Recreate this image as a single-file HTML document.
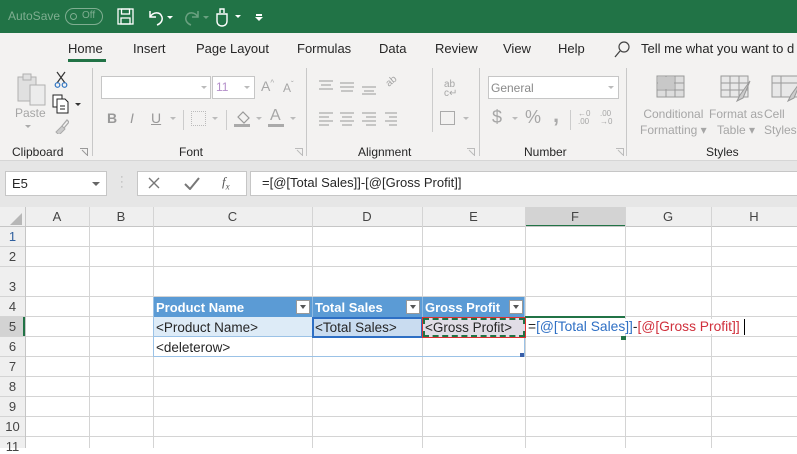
<!DOCTYPE html>
<html><head><meta charset="utf-8"><style>
*{margin:0;padding:0;box-sizing:border-box}
body{width:797px;height:448px;overflow:hidden;position:relative;font-family:"Liberation Sans",sans-serif;background:#fff}
.a{position:absolute}
.t{position:absolute;white-space:nowrap}
.g{color:#a6a6a6}
.hl{position:absolute;left:0;width:797px;height:1px;background:#d4d4d4}
.vl{position:absolute;top:207px;height:241px;width:1px;background:#d4d4d4}
.rn{position:absolute;left:0;width:25px;text-align:center;font-size:13px;color:#444}
.cn{position:absolute;top:207px;height:20px;line-height:20px;text-align:center;font-size:13px;color:#444}
.dd{position:absolute;width:14px;height:14px;background:#fff;border:1px solid #999}
.dd:after{content:"";position:absolute;left:3px;top:4px;border-left:3.5px solid transparent;border-right:3.5px solid transparent;border-top:4px solid #555}
</style></head><body>
<!-- title bar -->
<div class="a" style="left:0;top:0;width:797px;height:33px;background:#217346"></div>
<div class="t" style="left:8px;top:9px;font-size:12px;color:#7fae91">AutoSave</div>
<div class="a" style="left:65px;top:8px;width:38px;height:17px;border:1px solid #7fae91;border-radius:9px"></div>
<div class="a" style="left:70px;top:13px;width:7px;height:7px;border-radius:50%;border:1px solid #7fae91"></div>
<div class="t" style="left:82px;top:10px;font-size:10px;color:#7fae91">Off</div>
<svg class="a" style="left:117px;top:8px" width="18" height="18"><rect x="1" y="1" width="15" height="15" fill="none" stroke="#fff" stroke-width="1.3"/><rect x="4.5" y="1" width="8" height="5" fill="none" stroke="#fff" stroke-width="1.3"/><rect x="4" y="10" width="9" height="6" fill="none" stroke="#fff" stroke-width="1.3"/></svg>
<svg class="a" style="left:146px;top:7px" width="30" height="20"><path d="M4 4v6h6M4 10c3-5 10-6 12 0c1 4-2 7-5 8" fill="none" stroke="#fff" stroke-width="1.5"/><path d="M21 9l3 3l3-3z" fill="#fff"/></svg>
<svg class="a" style="left:182px;top:7px" width="30" height="20"><path d="M16 4v6h-6M16 10c-3-5-10-6-12 0c-1 4 2 7 5 8" fill="none" stroke="#6ba181" stroke-width="1.5"/><path d="M21 9l3 3l3-3z" fill="#6ba181"/></svg>
<svg class="a" style="left:214px;top:6px" width="32" height="22"><path d="M6 7v-4h4v4M3 8h10v7c0 3-2 5-5 5s-5-2-5-5z" fill="none" stroke="#fff" stroke-width="1.4"/><path d="M21 9l3 3l3-3z" fill="#fff"/></svg>
<div class="a" style="left:256px;top:14px;width:6px;height:1.5px;background:#fff"></div>
<svg class="a" style="left:255px;top:17px" width="8" height="5"><path d="M0 0h8l-4 4z" fill="#fff"/></svg>
<!-- ribbon -->
<div class="a" style="left:0;top:33px;width:797px;height:128px;background:#f3f2f1"></div>
<div class="a" style="left:0;top:160px;width:797px;height:1px;background:#d6d6d6"></div>
<div class="t" style="left:68px;top:41px;font-size:13px;color:#262626">Home</div>
<div class="a" style="left:68px;top:59px;width:38px;height:3px;background:#217346"></div>
<div class="t" style="left:133px;top:41px;font-size:13px;color:#262626">Insert</div>
<div class="t" style="left:196px;top:41px;font-size:13px;color:#262626">Page Layout</div>
<div class="t" style="left:297px;top:41px;font-size:13px;color:#262626">Formulas</div>
<div class="t" style="left:379px;top:41px;font-size:13px;color:#262626">Data</div>
<div class="t" style="left:435px;top:41px;font-size:13px;color:#262626">Review</div>
<div class="t" style="left:503px;top:41px;font-size:13px;color:#262626">View</div>
<div class="t" style="left:558px;top:41px;font-size:13px;color:#262626">Help</div>
<svg class="a" style="left:614px;top:41px" width="16" height="17"><circle cx="10" cy="6" r="5" fill="none" stroke="#444" stroke-width="1.2"/><path d="M6 10l-5 6" stroke="#444" stroke-width="1.3"/></svg>
<div class="t" style="left:641px;top:41px;font-size:13px;color:#262626">Tell me what you want to d</div>
<!-- clipboard -->
<svg class="a" style="left:16px;top:72px" width="32" height="34"><rect x="2" y="5" width="18" height="24" fill="#e0e0e0" stroke="#b0b0b0"/><rect x="7" y="2" width="8" height="6" fill="#e0e0e0" stroke="#b0b0b0"/><rect x="14" y="13" width="15" height="20" fill="#ececec" stroke="#b0b0b0"/></svg>
<div class="t g" style="left:15px;top:106px;font-size:12px">Paste</div>
<svg class="a" style="left:25px;top:125px" width="6" height="4"><path d="M0 0h6l-3 3z" fill="#aaa"/></svg>
<svg class="a" style="left:54px;top:71px" width="14" height="18"><path d="M3 1l8 11M11 1l-8 11" stroke="#333" stroke-width="1.2"/><circle cx="3.5" cy="14" r="2.3" fill="none" stroke="#2f75c3" stroke-width="1.2"/><circle cx="10.5" cy="14" r="2.3" fill="none" stroke="#2f75c3" stroke-width="1.2"/></svg>
<svg class="a" style="left:52px;top:94px" width="30" height="20"><rect x="1" y="1" width="9" height="12" fill="#fff" stroke="#222"/><path d="M5 5h8l3 3v11h-11z" fill="#fff" stroke="#222"/><path d="M8 12h5M8 15h5" stroke="#222"/><path d="M23 9h6l-3 3z" fill="#333"/></svg>
<svg class="a" style="left:53px;top:118px" width="16" height="16"><path d="M3 14l6-6l3 3l-6 6z" fill="#ccc" stroke="#aaa"/><path d="M9 8l5-6l2 2l-5 6" fill="none" stroke="#aaa" stroke-width="1.3"/></svg>
<div class="t" style="left:12px;top:145px;font-size:12px;color:#262626">Clipboard</div>
<svg class="a" style="left:80px;top:148px" width="8" height="8"><path d="M0 .5h7.5v7.5M2 2l5 5" fill="none" stroke="#999"/></svg>
<div class="a" style="left:92px;top:68px;width:1px;height:88px;background:#c8c8c8"></div>
<!-- font -->
<div class="a" style="left:101px;top:76px;width:110px;height:23px;background:#fff;border:1px solid #c6c6c6"></div>
<svg class="a" style="left:201px;top:86px" width="6" height="4"><path d="M0 0h6l-3 3z" fill="#bbb"/></svg>
<div class="a" style="left:212px;top:76px;width:43px;height:23px;background:#fff;border:1px solid #c6c6c6"></div>
<div class="t" style="left:216px;top:80px;font-size:12px;color:#b48fc9">11</div>
<svg class="a" style="left:244px;top:86px" width="6" height="4"><path d="M0 0h6l-3 3z" fill="#bbb"/></svg>
<div class="t g" style="left:261px;top:78px;font-size:14px">A<sup style="font-size:8px">^</sup></div>
<div class="t g" style="left:283px;top:80px;font-size:12px">A<sup style="font-size:8px">ˇ</sup></div>
<div class="t" style="left:107px;top:110px;font-size:14px;font-weight:bold;color:#999">B</div>
<div class="t" style="left:130px;top:110px;font-size:14px;font-style:italic;color:#999">I</div>
<div class="t" style="left:151px;top:110px;font-size:14px;text-decoration:underline;color:#999">U</div>
<svg class="a" style="left:170px;top:117px" width="6" height="4"><path d="M0 0h6l-3 3z" fill="#bbb"/></svg>
<div class="a" style="left:183px;top:110px;width:1px;height:20px;background:#ccc"></div>
<div class="a" style="left:191px;top:111px;width:15px;height:15px;border:1px dotted #bbb"></div>
<svg class="a" style="left:212px;top:117px" width="6" height="4"><path d="M0 0h6l-3 3z" fill="#bbb"/></svg>
<div class="a" style="left:226px;top:110px;width:1px;height:20px;background:#ccc"></div>
<svg class="a" style="left:234px;top:109px" width="18" height="18"><path d="M4 8l5-5l6 6l-5 5z" fill="none" stroke="#999" stroke-width="1.2"/><rect x="0" y="15" width="16" height="3" fill="#aaa"/></svg>
<svg class="a" style="left:256px;top:117px" width="6" height="4"><path d="M0 0h6l-3 3z" fill="#bbb"/></svg>
<div class="t g" style="left:270px;top:107px;font-size:16px">A</div>
<div class="a" style="left:268px;top:124px;width:16px;height:3px;background:#aaa"></div>
<svg class="a" style="left:290px;top:117px" width="6" height="4"><path d="M0 0h6l-3 3z" fill="#bbb"/></svg>
<div class="t" style="left:179px;top:145px;font-size:12px;color:#262626">Font</div>
<svg class="a" style="left:295px;top:148px" width="8" height="8"><path d="M0 .5h7.5v7.5M2 2l5 5" fill="none" stroke="#bbb"/></svg>
<div class="a" style="left:306px;top:68px;width:1px;height:88px;background:#c8c8c8"></div>
<!-- alignment -->
<svg class="a" style="left:317px;top:78px" width="90" height="50" stroke="#999" stroke-width="1">
<path d="M2 3h14M4 7h10M2 11h14M23 5h14M23 9h14M24 13h12M45 9h14M47 13h10M45 16h14"/>
<path d="M2 35h14M2 39h10M2 43h14M2 47h10M23 35h14M25 39h10M23 43h14M25 47h10M45 35h14M49 39h10M45 43h14M49 47h10M68 35h12M72 39h8M68 43h12M72 47h8"/></svg>
<div class="t g" style="left:386px;top:76px;font-size:10px;transform:rotate(-40deg)">ab</div>
<div class="t g" style="left:444px;top:80px;font-size:10px;line-height:9px">ab<br>c↵</div>
<div class="a" style="left:432px;top:68px;width:1px;height:64px;background:#ccc"></div>
<div class="a" style="left:440px;top:111px;width:15px;height:14px;border:1px solid #aaa"></div>
<svg class="a" style="left:463px;top:117px" width="6" height="4"><path d="M0 0h6l-3 3z" fill="#bbb"/></svg>
<div class="t" style="left:358px;top:145px;font-size:12px;color:#262626">Alignment</div>
<svg class="a" style="left:467px;top:148px" width="8" height="8"><path d="M0 .5h7.5v7.5M2 2l5 5" fill="none" stroke="#bbb"/></svg>
<div class="a" style="left:479px;top:68px;width:1px;height:88px;background:#c8c8c8"></div>
<!-- number -->
<div class="a" style="left:488px;top:76px;width:131px;height:23px;background:#fff;border:1px solid #c6c6c6"></div>
<div class="t g" style="left:491px;top:81px;font-size:12px;color:#8a8a8a">General</div>
<svg class="a" style="left:608px;top:86px" width="6" height="4"><path d="M0 0h6l-3 3z" fill="#bbb"/></svg>
<div class="t g" style="left:492px;top:107px;font-size:18px">$</div>
<svg class="a" style="left:512px;top:117px" width="6" height="4"><path d="M0 0h6l-3 3z" fill="#bbb"/></svg>
<div class="t g" style="left:525px;top:107px;font-size:18px">%</div>
<div class="t" style="left:553px;top:102px;font-size:22px;font-weight:bold;color:#aaa">,</div>
<div class="a" style="left:570px;top:110px;width:1px;height:20px;background:#ccc"></div>
<div class="t g" style="left:578px;top:110px;font-size:8px;line-height:8px">←0<br>.00</div>
<div class="t g" style="left:600px;top:110px;font-size:8px;line-height:8px">.00<br>→0</div>
<div class="t" style="left:524px;top:145px;font-size:12px;color:#262626">Number</div>
<svg class="a" style="left:616px;top:148px" width="8" height="8"><path d="M0 .5h7.5v7.5M2 2l5 5" fill="none" stroke="#bbb"/></svg>
<div class="a" style="left:626px;top:68px;width:1px;height:88px;background:#c8c8c8"></div>
<!-- styles -->
<svg class="a" style="left:656px;top:75px" width="30" height="24"><rect x="1" y="1" width="27" height="21" fill="#ddd" stroke="#999"/><path d="M1 8h27M1 15h27M10 1v21M19 1v21" stroke="#999"/><rect x="2" y="2" width="16" height="12" fill="#c8c8c8"/></svg>
<svg class="a" style="left:720px;top:75px" width="32" height="30"><rect x="1" y="1" width="27" height="21" fill="#e8e8e8" stroke="#999"/><path d="M1 8h27M1 15h27M10 1v21M19 1v21" stroke="#999"/><path d="M30 6l-10 14l-3 6l6-3z" fill="#ccc" stroke="#999"/></svg>
<svg class="a" style="left:771px;top:75px" width="26" height="30"><rect x="1" y="1" width="27" height="21" fill="#e8e8e8" stroke="#999"/><path d="M1 8h27M10 1v21" stroke="#999"/><path d="M30 6l-10 14l-3 6l6-3z" fill="#ccc" stroke="#999"/></svg>
<div class="t g" style="left:640px;top:106px;font-size:12px;line-height:16px;text-align:center">Conditional<br>Formatting ▾</div>
<div class="t g" style="left:709px;top:106px;font-size:12px;line-height:16px;text-align:center">Format as<br>Table ▾</div>
<div class="t g" style="left:764px;top:106px;font-size:12px;line-height:16px">Cell<br>Styles</div>
<div class="t" style="left:706px;top:145px;font-size:12px;color:#262626">Styles</div>
<!-- formula bar -->
<div class="a" style="left:0;top:161px;width:797px;height:46px;background:#e6e6e6"></div>
<div class="a" style="left:5px;top:171px;width:102px;height:25px;background:#fff;border:1px solid #c6c6c6"></div>
<div class="t" style="left:12px;top:176px;font-size:13px;color:#262626">E5</div>
<svg class="a" style="left:92px;top:182px" width="8" height="5"><path d="M0 0h8l-4 4z" fill="#666"/></svg>
<div class="t" style="left:120px;top:175px;font-size:11px;color:#aaa;line-height:5px">·<br>·<br>·</div>
<div class="a" style="left:137px;top:171px;width:110px;height:25px;background:#fff;border:1px solid #c6c6c6"></div>
<svg class="a" style="left:148px;top:177px" width="12" height="12"><path d="M1 1l10 10M11 1l-10 10" stroke="#777" stroke-width="1.4"/></svg>
<svg class="a" style="left:184px;top:177px" width="16" height="13"><path d="M1 7l5 5l9-11" fill="none" stroke="#777" stroke-width="2"/></svg>
<div class="t" style="left:222px;top:174px;font-size:13px;font-style:italic;font-family:'Liberation Serif',serif;color:#555"><i>f</i><sub style="font-size:9px">x</sub></div>
<div class="a" style="left:250px;top:171px;width:547px;height:25px;background:#fff;border:1px solid #c6c6c6;border-right:none"></div>
<div class="t" style="left:262px;top:175px;font-size:13px;color:#262626">=[@[Total Sales]]-[@[Gross Profit]]</div>
<!-- grid headers -->
<div class="a" style="left:0;top:207px;width:797px;height:20px;background:#efefef"></div>
<div class="a" style="left:0;top:207px;width:25px;height:241px;background:#efefef"></div>
<svg class="a" style="left:9px;top:212px" width="14" height="14"><path d="M13 1v12h-12z" fill="#b7b7b7"/></svg>
<div class="a" style="left:525px;top:207px;width:100px;height:20px;background:#d3d3d3"></div>
<div class="a" style="left:525px;top:225px;width:100px;height:2px;background:#217346"></div>
<div class="a" style="left:0;top:317px;width:25px;height:20px;background:#d3d3d3"></div>
<div class="a" style="left:23px;top:317px;width:2px;height:20px;background:#217346"></div>
<div class="hl" style="top:226px;background:#c6c6c6"></div>
<div class="hl" style="top:246px"></div><div class="hl" style="top:266px"></div><div class="hl" style="top:296px"></div>
<div class="hl" style="top:316px"></div><div class="hl" style="top:336px"></div><div class="hl" style="top:356px"></div>
<div class="hl" style="top:376px"></div><div class="hl" style="top:396px"></div><div class="hl" style="top:416px"></div><div class="hl" style="top:436px"></div>
<div class="vl" style="left:25px;background:#c6c6c6"></div><div class="vl" style="left:89px"></div><div class="vl" style="left:153px"></div>
<div class="vl" style="left:312px"></div><div class="vl" style="left:422px"></div><div class="vl" style="left:525px"></div>
<div class="vl" style="left:625px"></div><div class="vl" style="left:711px"></div>
<div class="cn" style="left:25px;width:64px">A</div><div class="cn" style="left:89px;width:64px">B</div>
<div class="cn" style="left:153px;width:159px">C</div><div class="cn" style="left:312px;width:110px">D</div>
<div class="cn" style="left:422px;width:103px">E</div><div class="cn" style="left:525px;width:100px">F</div>
<div class="cn" style="left:625px;width:86px">G</div><div class="cn" style="left:711px;width:86px">H</div>
<div class="rn" style="top:229px;color:#2f5f9e">1</div><div class="rn" style="top:249px">2</div><div class="rn" style="top:279px">3</div>
<div class="rn" style="top:299px">4</div><div class="rn" style="top:319px">5</div><div class="rn" style="top:339px">6</div>
<div class="rn" style="top:359px">7</div><div class="rn" style="top:379px">8</div><div class="rn" style="top:399px">9</div>
<div class="rn" style="top:419px">10</div><div class="rn" style="top:439px">11</div>
<!-- table -->
<div class="a" style="left:153px;top:297px;width:372px;height:20px;background:#5b9bd5"></div>
<div class="a" style="left:312px;top:297px;width:1px;height:20px;background:#8fbbe3"></div>
<div class="a" style="left:422px;top:297px;width:1px;height:20px;background:#8fbbe3"></div>
<div class="t" style="left:156px;top:300px;font-size:13px;font-weight:bold;color:#fff">Product Name</div>
<div class="t" style="left:315px;top:300px;font-size:13px;font-weight:bold;color:#fff">Total Sales</div>
<div class="t" style="left:425px;top:300px;font-size:13px;font-weight:bold;color:#fff">Gross Profit</div>
<div class="dd" style="left:296px;top:300px"></div><div class="dd" style="left:406px;top:300px"></div><div class="dd" style="left:509px;top:300px"></div>
<div class="a" style="left:153px;top:317px;width:159px;height:20px;background:#ddebf7"></div>
<div class="a" style="left:153px;top:336px;width:372px;height:1px;background:#9bc2e6"></div>
<div class="a" style="left:153px;top:356px;width:372px;height:1px;background:#9bc2e6"></div>
<div class="a" style="left:153px;top:297px;width:1px;height:60px;background:#9bc2e6"></div>
<div class="a" style="left:524px;top:297px;width:1px;height:60px;background:#9bc2e6"></div>
<div class="a" style="left:520px;top:353px;width:4px;height:4px;background:#3a5fa8"></div>
<div class="t" style="left:156px;top:320px;font-size:13.5px;color:#262626">&lt;Product Name&gt;</div>
<div class="t" style="left:156px;top:340px;font-size:13.5px;color:#262626">&lt;deleterow&gt;</div>
<div class="a" style="left:312px;top:317px;width:111px;height:21px;background:#c9dcf0;border:2px solid #2e6fc4"></div>
<div class="t" style="left:315px;top:320px;font-size:13.5px;color:#262626">&lt;Total Sales&gt;</div>
<div class="a" style="left:422px;top:317px;width:104px;height:21px;background:#e1dde6;border:1px solid #e03030"></div>
<div class="a" style="left:423px;top:318px;width:102px;height:19px;border:2px dashed #217346"></div>
<div class="t" style="left:425px;top:320px;font-size:13.5px;color:#262626">&lt;Gross Profit&gt;</div>
<div class="a" style="left:525px;top:316px;width:100px;height:2px;background:#217346"></div>
<div class="a" style="left:621px;top:336px;width:5px;height:4px;background:#217346"></div>
<div class="t" style="left:528px;top:319px;font-size:13.8px;background:#fff;padding-right:2px"><span style="color:#262626">=</span><span style="color:#2e6fc4">[@[Total Sales]]</span><span style="color:#262626">-</span><span style="color:#d0303c">[@[Gross Profit]]</span></div>
<div class="a" style="left:744px;top:319px;width:1px;height:16px;background:#000"></div>
</body></html>
